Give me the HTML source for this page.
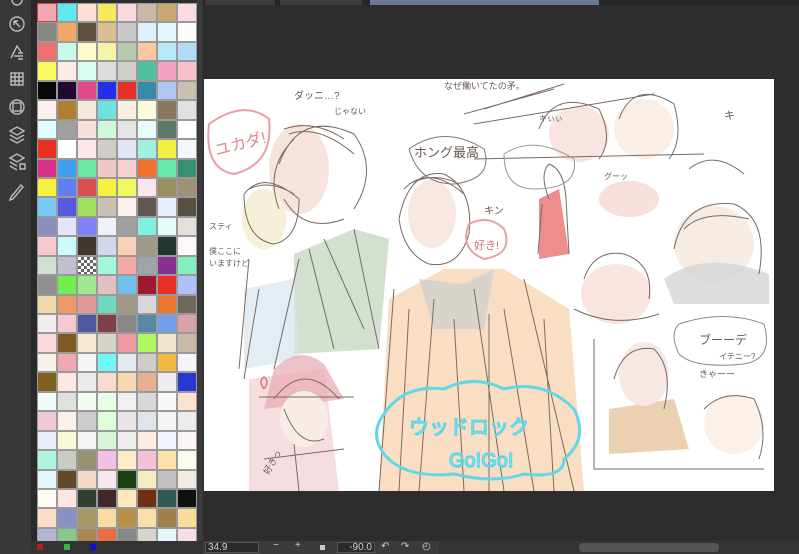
<!DOCTYPE html>
<html><head><meta charset="utf-8"><style>
*{margin:0;padding:0;box-sizing:border-box}
body{width:799px;height:554px;background:#2d2d2d;position:relative;overflow:hidden;font-family:"Liberation Sans","Noto Sans CJK JP",sans-serif}
#tool{position:absolute;left:0;top:0;width:31px;height:554px;background:#383838}
#gap{position:absolute;left:31px;top:0;width:6px;height:554px;background:#2a2a2a}
#pal{position:absolute;left:37px;top:3px;width:160px;height:538px;overflow:hidden;display:grid;grid-template-columns:repeat(8,20px);grid-auto-rows:19.45px;background:#888}
#pal div{border:1px solid #9a9a9a}
#sb{position:absolute;left:197px;top:0;width:6px;height:541px;background:#3a3a3a}
#pbot{position:absolute;left:31px;top:541px;width:172px;height:13px;background:#333}
#tabs{position:absolute;left:203px;top:0;width:596px;height:5px;background:#262626}
.tab{position:absolute;top:0;height:5px;background:#3c3c3c}
#canvas{position:absolute;left:204px;top:79px;width:570px;height:412px;background:#fff;overflow:hidden}
#status{position:absolute;left:203px;top:541px;width:596px;height:13px;background:#3b3b3b;color:#cfcfcf;font-size:10px}
</style></head><body>
<div id="tool">
<svg width="31" height="230" viewBox="0 0 31 230" fill="none" stroke="#bdbdbd" stroke-width="1.4">
<circle cx="17" cy="0" r="5"/>
<circle cx="17" cy="24" r="7"/><path d="M14 21l6 6M14 21h4M14 21v4"/>
<path d="M11 58l6-12 4 6M14 56h8M18 53h5M18 56h5M18 59h5"/>
<rect x="11" y="73" width="12" height="12"/><path d="M15 73v12M19 73v12M11 77h12M11 81h12"/>
<circle cx="17" cy="107" r="7"/><rect x="13" y="103" width="8" height="8"/>
<path d="M10 131l7-4 7 4-7 4zM10 135l7 4 7-4M10 139l7 4 7-4"/>
<path d="M10 158l7-4 7 4-7 4zM10 162l7 4M10 166l7 4M20 164h5v5h-5z"/>
<path d="M11 197l10-12 2 2-10 12-3 1z"/>
</svg></div>
<div id="gap"></div>
<div id="pal">
<div style="background:#f0a8b0;border-color:#d04040"></div><div style="background:#60e8f0"></div><div style="background:#fce0d8"></div><div style="background:#f8e860"></div><div style="background:#f8d8dc"></div><div style="background:#c8b8a8"></div><div style="background:#c8a870"></div><div style="background:#f8dce0"></div>
<div style="background:#888880"></div><div style="background:#f0a868"></div><div style="background:#605040"></div><div style="background:#d8c090"></div><div style="background:#c8c8c8"></div><div style="background:#e0f0f8"></div><div style="background:#e0f8fc"></div><div style="background:#fcfcfc"></div>
<div style="background:#f07070"></div><div style="background:#c8f8e8"></div><div style="background:#fcfcc8"></div><div style="background:#f4f4a8"></div><div style="background:#b8c8b0"></div><div style="background:#f8c8a0"></div><div style="background:#b8e8f4"></div><div style="background:#b0dcf8"></div>
<div style="background:#f8f860"></div><div style="background:#fcece8"></div><div style="background:#d8fcf0"></div><div style="background:#dcdcdc"></div><div style="background:#d0d0c8"></div><div style="background:#50c0a0"></div><div style="background:#f0a0c0"></div><div style="background:#f8c0c8"></div>
<div style="background:#080808"></div><div style="background:#200830"></div><div style="background:#e04888"></div><div style="background:#2030e8"></div><div style="background:#e83028"></div><div style="background:#3888a8"></div><div style="background:#b0c8f0"></div><div style="background:#c8c0b0"></div>
<div style="background:#fcf0ec"></div><div style="background:#b08030"></div><div style="background:#f4e8d8"></div><div style="background:#70e0e0"></div><div style="background:#f8f0e0"></div><div style="background:#fcfcdc"></div><div style="background:#887860"></div><div style="background:#e0e0e0"></div>
<div style="background:#e0fcfc"></div><div style="background:#a0a0a0"></div><div style="background:#f8e0d8"></div><div style="background:#d0f8d8"></div><div style="background:#e4e4e4"></div><div style="background:#e8fcfc"></div><div style="background:#607868"></div><div style="background:#ffffff"></div>
<div style="background:#e83020"></div><div style="background:#ffffff"></div><div style="background:#fce8e8"></div><div style="background:#d0ccc8"></div><div style="background:#e0e4f4"></div><div style="background:#a0f0e0"></div><div style="background:#f0f040"></div><div style="background:#f0f8fc"></div>
<div style="background:#d83088"></div><div style="background:#40a0f0"></div><div style="background:#68e8a0"></div><div style="background:#f0c8c8"></div><div style="background:#f8d0d0"></div><div style="background:#f07030"></div><div style="background:#68e8a8"></div><div style="background:#389070"></div>
<div style="background:#f8f040"></div><div style="background:#6080f0"></div><div style="background:#d85050"></div><div style="background:#f8f040"></div><div style="background:#f0f860"></div><div style="background:#fce4ec"></div><div style="background:#989060"></div><div style="background:#a09078"></div>
<div style="background:#78c8f8"></div><div style="background:#5858e0"></div><div style="background:#a0e060"></div><div style="background:#c8c0b0"></div><div style="background:#fcf0ec"></div><div style="background:#605850"></div><div style="background:#e8ecfc"></div><div style="background:#585040"></div>
<div style="background:#8890c0"></div><div style="background:#e4e4fc"></div><div style="background:#8080f8"></div><div style="background:#f0f0fc"></div><div style="background:#a0a0a0"></div><div style="background:#80f0e0"></div><div style="background:#e4fcf8"></div><div style="background:#e4e0d8"></div>
<div style="background:#f8c8d0"></div><div style="background:#c8fcf8"></div><div style="background:#403830"></div><div style="background:#d0d8ec"></div><div style="background:#f8d0b8"></div><div style="background:#a09888"></div><div style="background:#203830"></div><div style="background:#fcf8f8"></div>
<div style="background:#d0e0d0"></div><div style="background:#c0c0d0"></div><div style="background:repeating-conic-gradient(#666 0 25%,#fff 0 50%) 0 0/6px 6px"></div><div style="background:#a0f8d8"></div><div style="background:#f4a8a8"></div><div style="background:#a0a4a8"></div><div style="background:#883090"></div><div style="background:#80f0c0"></div>
<div style="background:#909090"></div><div style="background:#70f050"></div><div style="background:#a0e890"></div><div style="background:#e0c0c0"></div><div style="background:#70c0e8"></div><div style="background:#a01830"></div><div style="background:#e83028"></div><div style="background:#b0c0f8"></div>
<div style="background:#f0d8a8"></div><div style="background:#f09868"></div><div style="background:#e09898"></div><div style="background:#70d8c0"></div><div style="background:#a09880"></div><div style="background:#d8d8d8"></div><div style="background:#e87830"></div><div style="background:#706858"></div>
<div style="background:#eeeeee"></div><div style="background:#f8c8d0"></div><div style="background:#5058a0"></div><div style="background:#804048"></div><div style="background:#888888"></div><div style="background:#5888a8"></div><div style="background:#70a0e8"></div><div style="background:#d8a0a8"></div>
<div style="background:#f8d8dc"></div><div style="background:#805820"></div><div style="background:#f8e8d0"></div><div style="background:#d8d4cc"></div><div style="background:#f098a0"></div><div style="background:#b0f860"></div><div style="background:#f0e4cc"></div><div style="background:#c8bca8"></div>
<div style="background:#f8f0e8"></div><div style="background:#f0a8b0"></div><div style="background:#f4f4f4"></div><div style="background:#70f8f8"></div><div style="background:#e4e8f0"></div><div style="background:#d0ccc8"></div><div style="background:#f0b840"></div><div style="background:#f4f4fc"></div>
<div style="background:#806020"></div><div style="background:#fce8e0"></div><div style="background:#eaeaea"></div><div style="background:#f8dcd0"></div><div style="background:#f8d8b0"></div><div style="background:#e8b090"></div><div style="background:#ececec"></div><div style="background:#2838d0"></div>
<div style="background:#f0fcfc"></div><div style="background:#e0e0e0"></div><div style="background:#f0fcf0"></div><div style="background:#e8fce8"></div><div style="background:#f0f0f0"></div><div style="background:#d8d8d8"></div><div style="background:#f8f8f8"></div><div style="background:#fce0d0"></div>
<div style="background:#f0c8d8"></div><div style="background:#fcf0e8"></div><div style="background:#cccccc"></div><div style="background:#e0fcd8"></div><div style="background:#e8e4e4"></div><div style="background:#e0e4ec"></div><div style="background:#f4f4f4"></div><div style="background:#ececec"></div>
<div style="background:#e8ecfc"></div><div style="background:#f8f8d8"></div><div style="background:#f4f4f4"></div><div style="background:#d8f4d8"></div><div style="background:#eeeeea"></div><div style="background:#fcece4"></div><div style="background:#f0f4fc"></div><div style="background:#fcf4f4"></div>
<div style="background:#b0f4e0"></div><div style="background:#c8ccc4"></div><div style="background:#989070"></div><div style="background:#f4c0e8"></div><div style="background:#fcecc8"></div><div style="background:#f4c0d8"></div><div style="background:#fce0a8"></div><div style="background:#fcfcec"></div>
<div style="background:#e4f4fc"></div><div style="background:#604828"></div><div style="background:#f4d8c8"></div><div style="background:#f4e8ec"></div><div style="background:#184010"></div><div style="background:#f4ecc0"></div><div style="background:#c0c0c0"></div><div style="background:#f4e8e4"></div>
<div style="background:#fffcf4"></div><div style="background:#fce8e0"></div><div style="background:#304030"></div><div style="background:#402828"></div><div style="background:#fce8b8"></div><div style="background:#703010"></div><div style="background:#305858"></div><div style="background:#101010"></div>
<div style="background:#fcdcc8"></div><div style="background:#8890c8"></div><div style="background:#a89868"></div><div style="background:#f8dca0"></div><div style="background:#b89048"></div><div style="background:#f8e0a8"></div><div style="background:#a08048"></div><div style="background:#f8dc98"></div>
<div style="background:#b0b8d0"></div><div style="background:#88c888"></div><div style="background:#a88850"></div><div style="background:#e87040"></div><div style="background:#888888"></div><div style="background:#d8d4cc"></div><div style="background:#e4f8fc"></div><div style="background:#f4e0e4"></div>
</div>
<div id="sb"></div>
<div id="pbot"><div style="position:absolute;left:6px;top:3px;width:6px;height:6px;background:#b02020"></div><div style="position:absolute;left:33px;top:3px;width:6px;height:6px;background:#40b040"></div><div style="position:absolute;left:59px;top:3px;width:6px;height:6px;background:#1010d0"></div></div>
<div id="tabs"><div class="tab" style="left:2px;width:70px"></div><div class="tab" style="left:77px;width:82px"></div><div class="tab" style="left:167px;width:229px;background:#6a7890"></div></div>
<div id="canvas">
<svg width="570" height="412" viewBox="0 0 570 412" fill="none" stroke="#7a6a60" stroke-width="1">
<path d="M90 175 L150 150 L185 160 L175 270 L90 275 Z" fill="#c8d8c4" stroke="none" opacity=".8"/>
<path d="M40 210 L90 200 L95 280 L40 290Z" fill="#d8e4f0" stroke="none" opacity=".7"/>
<ellipse cx="95" cy="90" rx="30" ry="45" fill="#f6e4dc" stroke="none"/>
<ellipse cx="60" cy="140" rx="22" ry="30" fill="#f6f0d8" stroke="none"/>
<path d="M185 220 L240 190 L300 190 L365 230 L380 412 L175 412 Z" fill="#f8d8b8" stroke="none" opacity=".85"/>
<path d="M215 200 L260 205 L290 190 L280 250 L230 250Z" fill="#cfcfcf" stroke="none" opacity=".8"/>
<ellipse cx="228" cy="135" rx="24" ry="34" fill="#f8e8e0" stroke="none"/>
<path d="M45 300 L120 290 L135 412 L45 412Z" fill="#f2d4d8" stroke="none" opacity=".8"/>
<path d="M70 290 Q95 265 120 285 L140 320 L60 330 Z" fill="#e8a8b4" stroke="none" opacity=".7"/>
<ellipse cx="100" cy="340" rx="24" ry="28" fill="#f8ece8" stroke="none"/>
<path d="M335 120 L355 110 L365 175 L335 180Z" fill="#e87070" stroke="none" opacity=".8"/>
<ellipse cx="375" cy="55" rx="30" ry="28" fill="#f8e4e0" stroke="none"/>
<ellipse cx="440" cy="50" rx="30" ry="30" fill="#fbeee4" stroke="none"/>
<ellipse cx="510" cy="165" rx="40" ry="38" fill="#f6ece4" stroke="none"/>
<path d="M460 200 Q500 170 565 195 L565 225 L470 225Z" fill="#d4d4d4" stroke="none" opacity=".8"/>
<ellipse cx="412" cy="215" rx="35" ry="30" fill="#fae4e0" stroke="none"/>
<ellipse cx="425" cy="120" rx="30" ry="18" fill="#f6e0d8" stroke="none"/>
<path d="M405 330 L470 320 L485 370 L405 375Z" fill="#e8c8a4" stroke="none" opacity=".85"/>
<ellipse cx="440" cy="295" rx="25" ry="32" fill="#f8e8e4" stroke="none"/>
<ellipse cx="530" cy="345" rx="30" ry="30" fill="#faf0e8" stroke="none"/>
<path d="M75 85 Q95 30 150 55 Q175 90 150 130 M80 120 Q100 155 140 140 M90 60 Q60 90 75 130 M150 150 L175 270 M95 180 L70 290 M80 50 Q110 40 140 60 M85 55 Q115 45 150 75 M120 160 L160 250 M105 170 L130 270"/>
<path d="M40 115 Q60 90 95 120 Q95 160 70 165 Q40 160 40 115 M45 180 L35 290 M55 210 L40 300 M45 110 Q65 100 90 115"/>
<path d="M195 140 Q205 90 240 95 Q270 110 265 155 Q255 190 225 185 Q200 175 195 140 M200 110 Q225 85 260 115 M205 105 Q230 92 255 105"/>
<path d="M190 210 L175 412 M230 220 L215 412 M270 210 L300 412 M320 200 L370 412 M300 230 L330 412 M250 240 L260 412 M205 230 L195 412 M285 235 L285 412 M340 240 L350 412"/>
<path d="M70 320 Q100 280 135 320 M55 318 L150 318 M80 330 Q95 370 120 360 M90 365 L95 412 M60 380 L140 370"/>
<path d="M345 120 Q335 95 345 85 Q360 90 362 120 L365 175 M338 125 L334 175"/>
<path d="M335 50 Q350 10 395 30 Q410 60 395 80 M415 40 Q430 0 470 25 Q480 60 465 80 M260 35 L350 10 M270 45 L450 15 M270 80 L500 75 M280 30 L360 5"/>
<path d="M470 170 Q480 120 530 125 Q565 140 555 195 M485 90 Q510 70 540 95 M480 150 Q500 130 545 140"/>
<path d="M380 200 Q390 170 420 175 Q450 185 445 220 M370 230 Q410 250 455 235"/>
<path d="M390 260 L390 390 L560 390 M410 300 Q420 265 450 270 Q470 290 460 330 M500 330 Q520 310 550 320 Q565 350 555 380"/>
<path d="M475 245 Q520 230 560 245 Q570 280 540 285 Q490 290 475 275 Q465 255 475 245" stroke="#8a8a8a"/>
<path d="M300 75 Q330 55 370 80 Q375 110 330 110 Q300 110 300 75" stroke="#999"/>
<path d="M205 70 Q240 45 280 70 Q290 100 250 105 Q215 105 205 70" stroke="#777"/>
<path d="M5 45 Q40 20 65 40 Q70 85 30 95 Q0 90 5 45Z" stroke="#e8a0a8" stroke-width="2"/>
<text x="10" y="72" font-size="16" fill="#e08890" stroke="none" transform="rotate(-15 30 65)">ユカダ!</text>
<path d="M265 145 Q285 135 300 150 Q310 175 280 180 Q255 170 265 145Z" stroke="#e8a0a8" stroke-width="2"/>
<text x="270" y="170" font-size="11" fill="#d07080" stroke="none">好き!</text>
<path d="M60 310 q-6 -8 0 -12 q6 4 0 12" stroke="#e07080" stroke-width="1.5"/>
<path d="M180 335 Q200 305 240 310 Q270 295 300 310 Q340 300 370 330 Q385 360 360 380 Q360 400 320 395 Q290 405 250 395 Q200 400 180 375 Q165 355 180 335Z" stroke="#60d8e8" stroke-width="3"/>
<text x="205" y="355" font-size="20" fill="none" stroke="#60d8e8" stroke-width="1.5">ウッドロック</text>
<text x="245" y="388" font-size="20" fill="none" stroke="#60d8e8" stroke-width="1.5">Go!Go!</text>
<g fill="#6a5a50" stroke="none" font-size="10">
<text x="90" y="20">ダッニ…?</text><text x="130" y="35" font-size="8">じゃない</text>
<text x="210" y="78" font-size="13">ホング最高</text>
<text x="240" y="10" font-size="9">なぜ働いてたの矛。</text>
<text x="5" y="150" font-size="8">スティ</text><text x="5" y="175" font-size="8">僕ここに</text><text x="5" y="187" font-size="8">いますけど</text>
<text x="335" y="42" font-size="8">キぃぃ</text><text x="520" y="40" font-size="11">キ</text>
<text x="280" y="135">キン</text><text x="400" y="100" font-size="8">グーッ</text>
<text x="495" y="265" font-size="12">ブーーデ</text><text x="515" y="280" font-size="8">イテニー?</text><text x="495" y="298" font-size="9">きゃーー</text>
<text x="55" y="390" font-size="9" transform="rotate(-60 65 385)">好きっ</text>
</g>
</svg>
</div>
<div id="status">
<div style="position:absolute;left:2px;top:1px;width:54px;height:11px;border:1px solid #555;background:#2a2a2a;padding-left:2px;line-height:10px">34.9</div>
<span style="position:absolute;left:70px;top:-1px">−</span><span style="position:absolute;left:92px;top:-1px">+</span>
<div style="position:absolute;left:117px;top:4px;width:5px;height:5px;background:#ccc"></div>
<div style="position:absolute;left:134px;top:1px;width:38px;height:11px;border:1px solid #555;background:#2a2a2a;text-align:right;line-height:10px;padding-right:2px">-90.0</div>
<span style="position:absolute;left:178px;top:0">↶</span><span style="position:absolute;left:198px;top:0">↷</span><span style="position:absolute;left:219px;top:0">◴</span>
<div style="position:absolute;left:236px;top:0;width:360px;height:13px;background:#333"></div>
<div style="position:absolute;left:376px;top:2px;width:140px;height:9px;border-radius:4px;background:#555"></div>
</div>
</body></html>
